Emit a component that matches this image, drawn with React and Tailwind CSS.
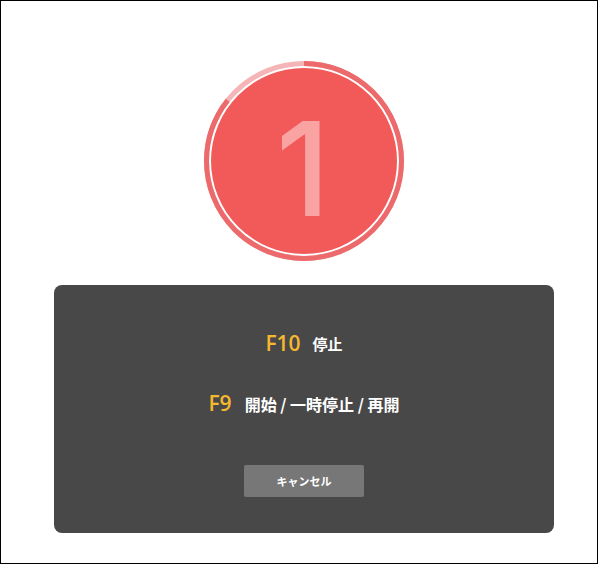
import React from "react";

function Ring() {
  const cx = 101;
  const cy = 101;
  const r = 97.5;
  const circ = 2 * Math.PI * r;
  const lightFrac = 52 / 360;
  return (
    <svg width="202" height="202" viewBox="0 0 202 202">
      <circle cx={cx} cy={cy} r={r} fill="none" stroke="#f5b4b5" strokeWidth="5" />
      <circle
        cx={cx}
        cy={cy}
        r={r}
        fill="none"
        stroke="#ec6a6c"
        strokeWidth="5"
        strokeDasharray={`${circ * (1 - lightFrac)} ${circ}`}
        transform={`rotate(-90 ${cx} ${cy})`}
      />
      <circle cx={cx} cy={cy} r="93" fill="#f25a5a" />
    </svg>
  );
}

export default function App() {
  return (
    <div className="w-[598px] h-[564px] border border-black bg-white flex flex-col items-center box-border pl-[10px]">
      <div className="relative mt-[59px] w-[202px] h-[202px]">
        <Ring />
        <div
          className="absolute inset-0 flex items-center justify-center text-[130px] leading-none text-[#f9a3a3] font-medium"
          style={{ fontFamily: "Inter, 'Noto Sans', sans-serif" }}
        >
          <span className="mt-[16px] -ml-[2px]">1</span>
        </div>
      </div>
      <div
        className="mt-[23px] w-[500px] h-[248px] rounded-[8px] bg-[#484848] flex flex-col items-center"
        style={{ fontFamily: "'Open Sans', 'Noto Sans CJK JP', sans-serif" }}
      >
        <div className="mt-[44px] h-[30px] flex items-center gap-[12px]">
          <span className="text-[21px] font-semibold text-[#f5b82e]">F10</span>
          <span className="text-[15px] font-bold text-white" style={{ fontFamily: "'Noto Sans CJK JP', sans-serif" }}>停止</span>
        </div>
        <div className="mt-[30px] h-[30px] flex items-center gap-[13px]">
          <span className="text-[21px] font-semibold text-[#f5b82e]">F9</span>
          <span className="text-[16px] font-bold text-white" style={{ fontFamily: "'Noto Sans CJK JP', sans-serif" }}>開始 / 一時停止 / 再開</span>
        </div>
        <button
          className="mt-[46px] w-[120px] h-[32px] rounded-[2px] bg-[#777777] text-white text-[11px] font-bold flex items-center justify-center"
          style={{ fontFamily: "'Noto Sans CJK JP', sans-serif" }}
        >
          キャンセル
        </button>
      </div>
    </div>
  );
}
